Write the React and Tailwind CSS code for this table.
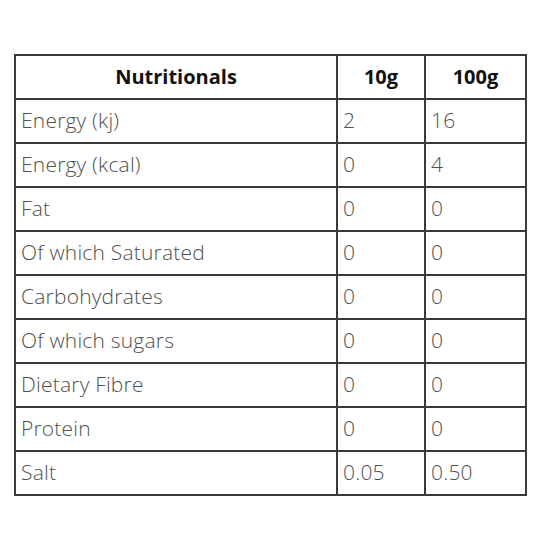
const rows = [
  ['Energy (kj)', '2', '16'],
  ['Energy (kcal)', '0', '4'],
  ['Fat', '0', '0'],
  ['Of which Saturated', '0', '0'],
  ['Carbohydrates', '0', '0'],
  ['Of which sugars', '0', '0'],
  ['Dietary Fibre', '0', '0'],
  ['Protein', '0', '0'],
  ['Salt', '0.05', '0.50'],
];

export default function App() {
  return (
    <div className="h-[540px] w-[540px] bg-white pl-[14px] pt-[54px]" style={{ fontFamily: '"Open Sans", "Noto Sans", sans-serif' }}>
      <table className="w-[511px] table-fixed border-collapse text-[#505050]">
        <colgroup>
          <col className="w-[322px]" />
          <col className="w-[88px]" />
          <col className="w-[101px]" />
        </colgroup>
        <thead>
          <tr className="h-[44px] text-[20px]">
            <th className="border-2 border-[#3a3a3a] text-center font-bold text-[#111]">Nutritionals</th>
            <th className="border-2 border-[#3a3a3a] text-center font-bold text-[#111]">10g</th>
            <th className="border-2 border-[#3a3a3a] text-center font-bold text-[#111]">100g</th>
          </tr>
        </thead>
        <tbody>
          {rows.map((r) => (
            <tr key={r[0]} className="h-[44px] text-[21px] tracking-[0.2px]">
              <td className="border-2 border-[#3a3a3a] px-[5px] font-light">{r[0]}</td>
              <td className="border-2 border-[#3a3a3a] px-[5px] font-light">{r[1]}</td>
              <td className="border-2 border-[#3a3a3a] px-[5px] font-light">{r[2]}</td>
            </tr>
          ))}
        </tbody>
      </table>
    </div>
  );
}
